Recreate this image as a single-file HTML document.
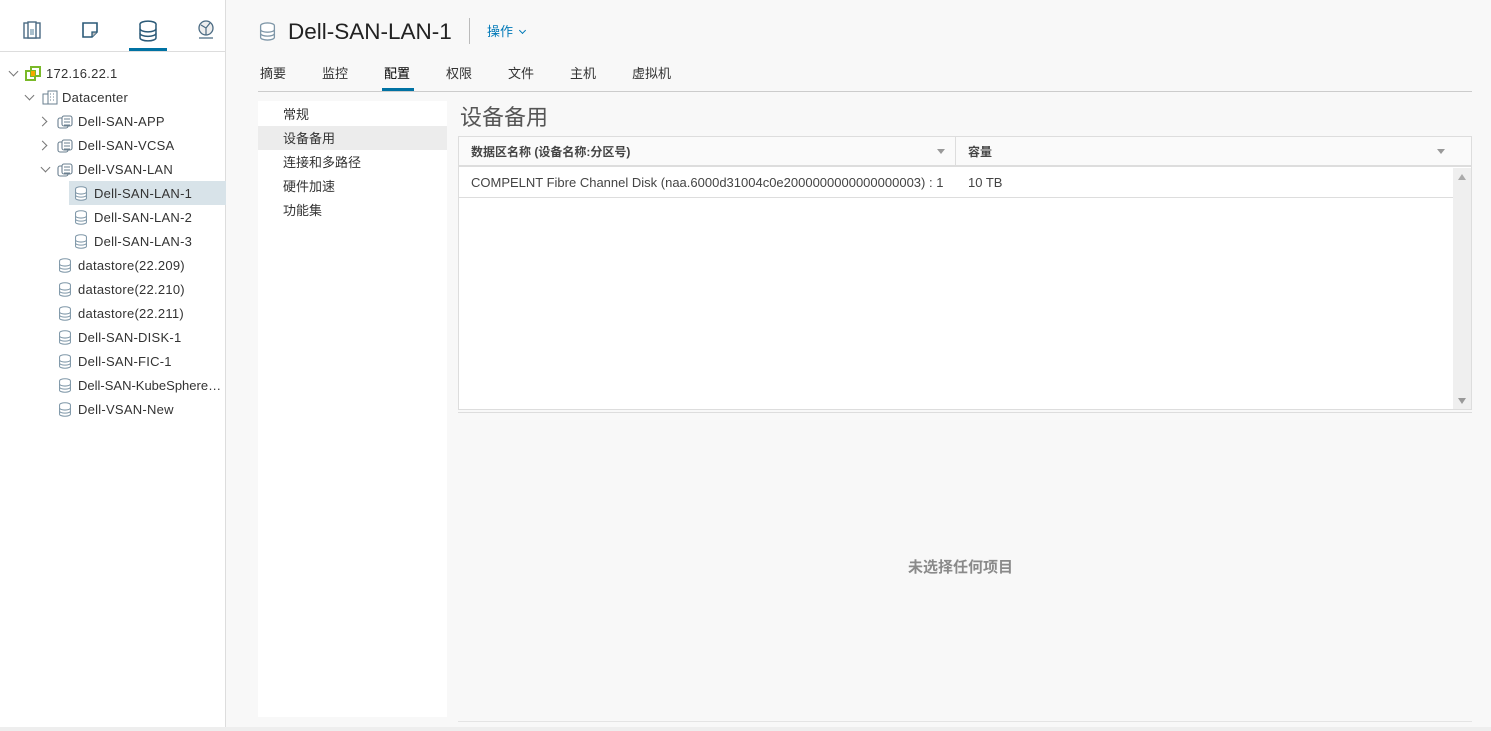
<!DOCTYPE html>
<html><head><meta charset="utf-8"><style>
*{margin:0;padding:0;box-sizing:border-box}
body{width:1491px;height:731px;overflow:hidden;background:#f8f8f8;font-family:"Liberation Sans","Noto Sans CJK SC",sans-serif;font-size:13px;color:#333;position:relative}
.a{position:absolute;white-space:nowrap}
#left{position:absolute;left:0;top:0;width:226px;height:731px;background:#fff;border-right:1px solid #ddd}
.row{position:absolute;height:24px;line-height:24px;font-size:13px;color:#333;letter-spacing:0.25px;white-space:nowrap}
.chev{position:absolute;width:7px;height:7px;border-right:1.3px solid #777;border-bottom:1.3px solid #777}
.dn{transform:rotate(45deg)}
.rt{transform:rotate(-45deg)}
.db{position:absolute;width:14px;height:15px}
</style></head><body>
<svg width="0" height="0" style="position:absolute"><defs>
<symbol id="db" viewBox="0 0 14 16"><g fill="#fff" stroke="#7f97a8" stroke-width="1.1"><ellipse cx="7" cy="3" rx="5.8" ry="2.2"/><path d="M1.2 3v10c0 1.2 2.6 2.2 5.8 2.2s5.8-1 5.8-2.2V3"/><path d="M1.2 6.4c0 1.2 2.6 2.2 5.8 2.2s5.8-1 5.8-2.2M1.2 9.7c0 1.2 2.6 2.2 5.8 2.2s5.8-1 5.8-2.2" fill="none"/></g></symbol>
<symbol id="cl" viewBox="0 0 16 16"><g fill="#fff" stroke="#6a7f8f" stroke-width="1.1"><rect x="1" y="4" width="10" height="10" rx="2"/><rect x="5" y="2" width="10" height="10" rx="2"/><path d="M7 5h6M7 8h6M7 11h6" fill="none"/></g></symbol>
</defs></svg>
<div id="left">
<svg class="a" style="left:22px;top:20px" width="20" height="20" viewBox="0 0 20 20"><g fill="none" stroke="#4a6a82" stroke-width="1.4"><rect x="2" y="3" width="16" height="15"/><rect x="6" y="2" width="8" height="16" fill="#fff"/><rect x="8" y="9" width="4" height="6" fill="#a9bfcc" stroke="none"/></g></svg>
<svg class="a" style="left:80px;top:20px" width="20" height="20" viewBox="0 0 20 20"><path d="M3 3h14v9l-5 5H3z" fill="none" stroke="#2b5a78" stroke-width="1.6"/><path d="M12 17v-5h5" fill="#bbb" stroke="#2b5a78" stroke-width="1.3"/></svg>
<svg class="a" style="left:138px;top:20px" width="20" height="22" viewBox="0 0 14 16"><g fill="#fff" stroke="#2b5a78" stroke-width="1.1"><ellipse cx="7" cy="3" rx="5.8" ry="2.2"/><path d="M1.2 3v10c0 1.2 2.6 2.2 5.8 2.2s5.8-1 5.8-2.2V3"/><path d="M1.2 6.4c0 1.2 2.6 2.2 5.8 2.2s5.8-1 5.8-2.2M1.2 9.7c0 1.2 2.6 2.2 5.8 2.2s5.8-1 5.8-2.2" fill="none"/></g></svg>
<svg class="a" style="left:196px;top:19px" width="20" height="22" viewBox="0 0 20 22"><circle cx="10" cy="9" r="7" fill="#eee" stroke="#4a6a82" stroke-width="1.3"/><path d="M5 6l5 3 4-5M10 9v7M3 19h14" fill="none" stroke="#4a6a82" stroke-width="1.2"/></svg>
<div class="a" style="left:129px;top:48px;width:38px;height:3px;background:#0072a3"></div>
<div class="a" style="left:0;top:51px;width:226px;height:1px;background:#ddd"></div>
<div class="a" style="left:69px;top:181px;width:157px;height:24px;background:#d8e3e9"></div>

<div class="chev dn" style="left:10px;top:68px"></div>
<svg class="a" style="left:25px;top:66px" width="16" height="16" viewBox="0 0 16 16"><rect x="1" y="5" width="9" height="9" fill="none" stroke="#7ab929" stroke-width="2"/><rect x="6" y="1" width="9" height="9" fill="none" stroke="#7ab929" stroke-width="2"/><rect x="6" y="5" width="4" height="5" fill="#f6a800"/></svg>
<div class="row" style="left:46px;top:62px">172.16.22.1</div>

<div class="chev dn" style="left:26px;top:92px"></div>
<svg class="a" style="left:42px;top:90px" width="16" height="15" viewBox="0 0 16 15"><g fill="none" stroke="#6a7f8f" stroke-width="1"><rect x="1" y="4" width="5" height="10"/><rect x="6" y="1" width="9" height="13"/><path d="M8 4h1M11 4h1M8 7h1M11 7h1M8 10h1M11 10h1"/></g></svg>
<div class="row" style="left:62px;top:86px">Datacenter</div>

<div class="chev rt" style="left:39px;top:118px"></div>
<svg class="a" style="left:57px;top:114px" width="16" height="16"><use href="#cl"/></svg>
<div class="row" style="left:78px;top:110px">Dell-SAN-APP</div>
<div class="chev rt" style="left:39px;top:142px"></div>
<svg class="a" style="left:57px;top:138px" width="16" height="16"><use href="#cl"/></svg>
<div class="row" style="left:78px;top:134px">Dell-SAN-VCSA</div>
<div class="chev dn" style="left:42px;top:164px"></div>
<svg class="a" style="left:57px;top:162px" width="16" height="16"><use href="#cl"/></svg>
<div class="row" style="left:78px;top:158px">Dell-VSAN-LAN</div>

<svg class="db" style="left:74px;top:186px"><use href="#db"/></svg><div class="row" style="left:94px;top:182px">Dell-SAN-LAN-1</div>
<svg class="db" style="left:74px;top:210px"><use href="#db"/></svg><div class="row" style="left:94px;top:206px">Dell-SAN-LAN-2</div>
<svg class="db" style="left:74px;top:234px"><use href="#db"/></svg><div class="row" style="left:94px;top:230px">Dell-SAN-LAN-3</div>
<svg class="db" style="left:58px;top:258px"><use href="#db"/></svg><div class="row" style="left:78px;top:254px">datastore(22.209)</div>
<svg class="db" style="left:58px;top:282px"><use href="#db"/></svg><div class="row" style="left:78px;top:278px">datastore(22.210)</div>
<svg class="db" style="left:58px;top:306px"><use href="#db"/></svg><div class="row" style="left:78px;top:302px">datastore(22.211)</div>
<svg class="db" style="left:58px;top:330px"><use href="#db"/></svg><div class="row" style="left:78px;top:326px">Dell-SAN-DISK-1</div>
<svg class="db" style="left:58px;top:354px"><use href="#db"/></svg><div class="row" style="left:78px;top:350px">Dell-SAN-FIC-1</div>
<svg class="db" style="left:58px;top:378px"><use href="#db"/></svg><div class="row" style="left:78px;top:374px;letter-spacing:0">Dell-SAN-KubeSphere…</div>
<svg class="db" style="left:58px;top:402px"><use href="#db"/></svg><div class="row" style="left:78px;top:398px">Dell-VSAN-New</div>
</div>
<div class="a" style="left:0;top:727px;width:1491px;height:4px;background:#eee"></div>

<svg class="a" style="left:259px;top:22px" width="17" height="19" viewBox="0 0 14 16"><use href="#db"/></svg>
<div class="a" style="left:288px;top:17px;font-size:22.5px;color:#222;line-height:30px">Dell-SAN-LAN-1</div>
<div class="a" style="left:469px;top:18px;width:1px;height:26px;background:#bbb"></div>
<div class="a" style="left:487px;top:23px;font-size:13px;color:#0079b8;line-height:18px">操作 <span style="display:inline-block;width:5px;height:5px;border-right:1.3px solid #0079b8;border-bottom:1.3px solid #0079b8;transform:rotate(45deg);margin-left:3px;vertical-align:3px"></span></div>

<div class="a" style="left:260px;top:65px;font-size:13px;line-height:18px;color:#333">摘要</div>
<div class="a" style="left:322px;top:65px;font-size:13px;line-height:18px;color:#333">监控</div>
<div class="a" style="left:384px;top:65px;font-size:13px;line-height:18px;color:#000">配置</div>
<div class="a" style="left:446px;top:65px;font-size:13px;line-height:18px;color:#333">权限</div>
<div class="a" style="left:508px;top:65px;font-size:13px;line-height:18px;color:#333">文件</div>
<div class="a" style="left:570px;top:65px;font-size:13px;line-height:18px;color:#333">主机</div>
<div class="a" style="left:632px;top:65px;font-size:13px;line-height:18px;color:#333">虚拟机</div>
<div class="a" style="left:258px;top:91px;width:1214px;height:1px;background:#ccc"></div>
<div class="a" style="left:382px;top:88px;width:32px;height:3px;background:#0072a3"></div>

<div class="a" style="left:258px;top:101px;width:189px;height:616px;background:#fff"></div>
<div class="a" style="left:258px;top:126px;width:189px;height:24px;background:#ececec"></div>
<div class="a" style="left:283px;top:106px;line-height:18px">常规</div>
<div class="a" style="left:283px;top:130px;line-height:18px">设备备用</div>
<div class="a" style="left:283px;top:154px;line-height:18px">连接和多路径</div>
<div class="a" style="left:283px;top:178px;line-height:18px">硬件加速</div>
<div class="a" style="left:283px;top:202px;line-height:18px">功能集</div>

<div class="a" style="left:460px;top:104px;font-size:22px;color:#565656;line-height:28px">设备备用</div>
<div class="a" style="left:458px;top:136px;width:1014px;height:274px;background:#fff;border:1px solid #ddd"></div>
<div class="a" style="left:459px;top:137px;width:1012px;height:30px;background:#fafafa;border-bottom:2px solid #ddd"></div>
<div class="a" style="left:955px;top:137px;width:1px;height:29px;background:#ddd"></div>
<div class="a" style="left:471px;top:144px;font-weight:bold;font-size:12px;line-height:16px;color:#444">数据区名称 (设备名称:分区号)</div>
<div class="a" style="left:968px;top:144px;font-weight:bold;font-size:12px;line-height:16px;color:#444">容量</div>
<div class="a" style="left:937px;top:149px;border-left:4px solid transparent;border-right:4px solid transparent;border-top:5px solid #999"></div>
<div class="a" style="left:1437px;top:149px;border-left:4px solid transparent;border-right:4px solid transparent;border-top:5px solid #999"></div>
<div class="a" style="left:471px;top:175px;font-size:13px;line-height:16px;color:#444">COMPELNT Fibre Channel Disk (naa.6000d31004c0e2000000000000000003) : 1</div>
<div class="a" style="left:968px;top:175px;font-size:13px;line-height:16px;color:#444">10 TB</div>
<div class="a" style="left:459px;top:197px;width:994px;height:1px;background:#ddd"></div>
<div class="a" style="left:1453px;top:168px;width:18px;height:241px;background:#efefef"></div>
<div class="a" style="left:1458px;top:174px;border-left:4px solid transparent;border-right:4px solid transparent;border-bottom:6px solid #aaa"></div>
<div class="a" style="left:1458px;top:398px;border-left:4px solid transparent;border-right:4px solid transparent;border-top:6px solid #999"></div>
<div class="a" style="left:458px;top:412px;width:1014px;height:1px;background:#ddd"></div>
<div class="a" style="left:908px;top:558px;font-size:15px;font-weight:bold;color:#8a8a8a;line-height:20px">未选择任何项目</div>
<div class="a" style="left:458px;top:721px;width:1014px;height:1px;background:#e4e4e4"></div>
</body></html>
